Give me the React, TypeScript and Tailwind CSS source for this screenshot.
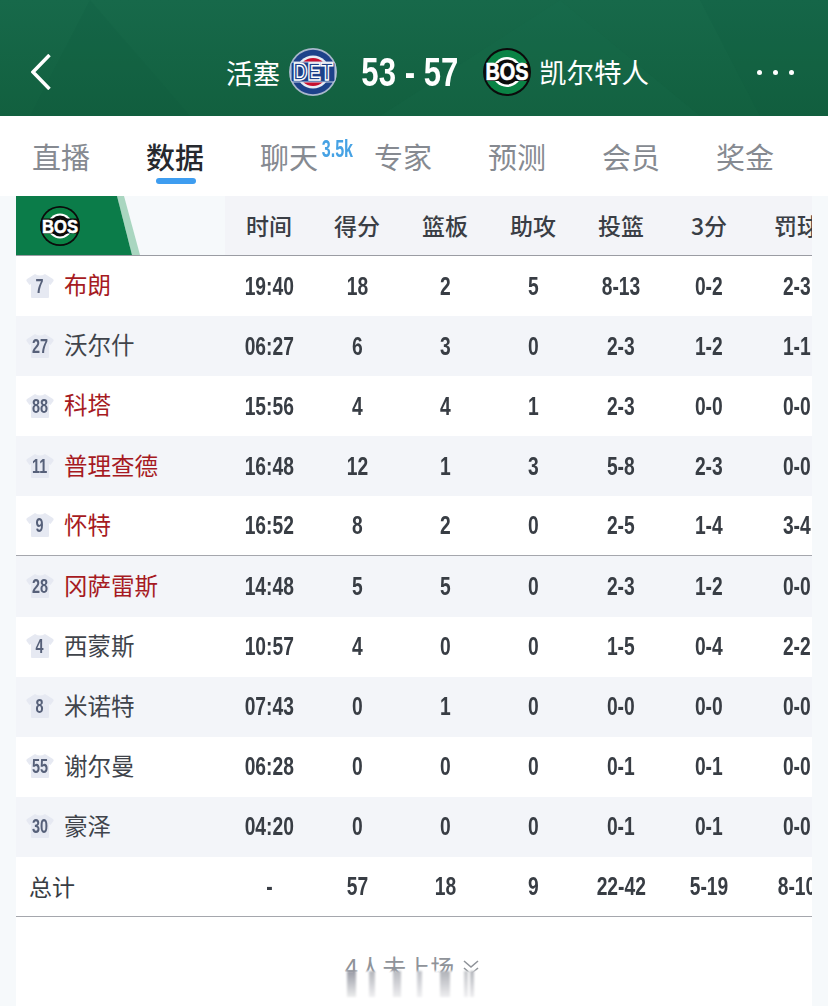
import React from 'react';

const cjk = { fontFamily: '"Noto Sans CJK SC", "Noto Sans", sans-serif' };

type Player = {
  no: string;
  name: string;
  starter?: boolean;
  stats: string[];
};

const players: Player[] = [
  { no: '7', name: '布朗', starter: true, stats: ['19:40', '18', '2', '5', '8-13', '0-2', '2-3'] },
  { no: '27', name: '沃尔什', stats: ['06:27', '6', '3', '0', '2-3', '1-2', '1-1'] },
  { no: '88', name: '科塔', starter: true, stats: ['15:56', '4', '4', '1', '2-3', '0-0', '0-0'] },
  { no: '11', name: '普理查德', starter: true, stats: ['16:48', '12', '1', '3', '5-8', '2-3', '0-0'] },
  { no: '9', name: '怀特', starter: true, stats: ['16:52', '8', '2', '0', '2-5', '1-4', '3-4'] },
  { no: '28', name: '冈萨雷斯', starter: true, stats: ['14:48', '5', '5', '0', '2-3', '1-2', '0-0'] },
  { no: '4', name: '西蒙斯', stats: ['10:57', '4', '0', '0', '1-5', '0-4', '2-2'] },
  { no: '8', name: '米诺特', stats: ['07:43', '0', '1', '0', '0-0', '0-0', '0-0'] },
  { no: '55', name: '谢尔曼', stats: ['06:28', '0', '0', '0', '0-1', '0-1', '0-0'] },
  { no: '30', name: '豪泽', stats: ['04:20', '0', '0', '0', '0-1', '0-1', '0-0'] },
];

const columns = ['时间', '得分', '篮板', '助攻', '投篮', '3分', '罚球'];
const totals = ['-', '57', '18', '9', '22-42', '5-19', '8-10'];
const tabs = ['直播', '数据', '聊天', '专家', '预测', '会员', '奖金'];

const Num = ({ children, className = 'scale-x-[0.74]' }: { children: React.ReactNode; className?: string }) => (
  <span
    className={`inline-block whitespace-nowrap font-bold ${className}`}
    style={{ fontFamily: '"Liberation Sans", Arial, sans-serif' }}
  >
    {children}
  </span>
);

const DetLogo = () => (
  <svg viewBox="0 0 48 48" className="h-12 w-12 shrink-0 overflow-visible">
    <circle cx="24" cy="24" r="24" fill="#a9b8cc" />
    <circle cx="24" cy="24" r="22.3" fill="#1d428a" />
    <circle cx="24" cy="24" r="16.5" fill="#e8edf5" />
    <circle cx="24" cy="24" r="14" fill="#c8102e" />
    <rect x="2" y="14" width="44" height="20" rx="2" fill="#1d428a" stroke="#c9d4e6" strokeWidth="1" />
    <text
      x="24"
      y="32"
      textAnchor="middle"
      fontFamily="Liberation Sans"
      fontWeight="700"
      fontSize="23"
      textLength="40"
      lengthAdjust="spacingAndGlyphs"
      fill="#1d428a"
      stroke="#ffffff"
      strokeWidth="1.4"
    >
      DET
    </text>
  </svg>
);

const BosLogo = ({ size = 'h-12 w-12' }: { size?: string }) => (
  <svg viewBox="0 0 48 48" className={`${size} shrink-0 overflow-visible`}>
    <circle cx="24" cy="24" r="24" fill="#0b0b0b" />
    <circle cx="24" cy="24" r="22" fill="#0a8345" />
    <circle cx="24" cy="24" r="15" fill="#ffffff" />
    <circle cx="24" cy="24" r="12.5" fill="#0b0b0b" />
    <rect x="1" y="15" width="46" height="18" rx="4" fill="#0b0b0b" />
    <text
      x="24"
      y="32"
      textAnchor="middle"
      fontFamily="Liberation Sans"
      fontWeight="700"
      fontSize="23"
      textLength="43"
      lengthAdjust="spacingAndGlyphs"
      fill="#ffffff"
      stroke="#ffffff"
      strokeWidth="0.7"
    >
      BOS
    </text>
  </svg>
);

const Jersey = ({ no }: { no: string }) => (
  <div className="relative h-[24px] w-[28px] shrink-0">
    <svg viewBox="0 0 28 24" className="h-full w-full">
      <path
        d="M9 0 Q14 3 19 0 L27 5 Q28 6 27.5 7 L24.5 11 L23 10 L23 23 Q23 24 22 24 L6 24 Q5 24 5 23 L5 10 L3.5 11 L0.5 7 Q0 6 1 5 Z"
        fill="#e6e9f2"
      />
    </svg>
    <div className="absolute inset-0 flex items-center justify-center text-[20px] leading-none text-[#566079]">
      <Num className="scale-x-[0.72]">{no}</Num>
    </div>
  </div>
);

const StatCell = ({ value }: { value: string }) => (
  <div className="flex w-[88px] shrink-0 justify-center text-[26px] leading-none text-[#383d44]">
    <Num>{value}</Num>
  </div>
);

const App: React.FC = () => {
  return (
    <div className="relative h-[1006px] w-[828px] overflow-hidden bg-[#f6f9fb]" style={cjk}>
      {/* Match header */}
      <header className="relative flex h-[116px] items-center overflow-hidden bg-gradient-to-b from-[#17694a] to-[#12603f] pt-[28px] text-white">
        <svg viewBox="0 0 828 116" className="absolute inset-0 h-full w-full">
          <polygon points="90,0 190,116 30,116" fill="#0f5a3a" opacity="0.15" />
          <polygon points="380,116 560,0 700,116" fill="#1d7350" opacity="0.15" />
          <polygon points="700,0 828,0 828,116 760,116" fill="#0f5a3a" opacity="0.15" />
        </svg>
        <svg viewBox="0 0 20 36" className="relative ml-[31px] mr-[175px] h-[36px] w-[20px] shrink-0" fill="none" stroke="#ffffff" strokeWidth="3.5">
          <path d="M18.5 1 L2 18 L18.5 35" />
        </svg>
        <div className="relative flex items-center">
          <span className="w-[54px] whitespace-nowrap text-[27px] leading-none">活塞</span>
          <div className="ml-[9px]">
            <DetLogo />
          </div>
          <div className="flex w-[146px] justify-center text-[41px] leading-none">
            <Num className="scale-x-[0.76]">53 - 57</Num>
          </div>
          <BosLogo />
          <span className="ml-[8px] whitespace-nowrap text-[27.5px] leading-none">凯尔特人</span>
        </div>
        <div className="relative ml-auto mr-[34px] flex gap-[11px]">
          <span className="h-[5px] w-[5px] rounded-full bg-white" />
          <span className="h-[5px] w-[5px] rounded-full bg-white" />
          <span className="h-[5px] w-[5px] rounded-full bg-white" />
        </div>
      </header>

      {/* Tabs */}
      <nav className="flex h-[80px] items-center bg-white pl-[4px]">
        {tabs.map((tab, i) => (
          <div key={tab} className="relative flex h-full w-[114px] items-center justify-center">
            <span className={`text-[29px] leading-none ${i === 1 ? 'font-medium text-[#26292e]' : 'text-[#868a91]'}`}>{tab}</span>
            {i === 1 && <span className="absolute bottom-[12px] left-[38px] h-[6px] w-[40px] rounded-full bg-[#3e9df0]" />}
            {i === 2 && (
              <span className="absolute left-[83px] top-[20px] text-[23px] leading-none text-[#46a2e4]">
                <Num className="scale-x-[0.7]">3.5k</Num>
              </span>
            )}
          </div>
        ))}
      </nav>

      {/* Box score */}
      <section className="mx-[16px] w-[796px] overflow-hidden bg-white">
        <div className="flex h-[60px] border-b border-[#9a9ca3] bg-[#f3f4f8]">
          <div className="h-full w-[209px] shrink-0 bg-[#f6f9fb]">
            <div className="relative h-full w-[124px]">
              <svg viewBox="0 0 124 59" preserveAspectRatio="none" className="absolute inset-0 h-full w-full">
                <polygon points="101,0 108,0 124,59 116,59" fill="#a9d6c0" />
                <polygon points="0,0 101,0 116,59 0,59" fill="#0b7c49" />
              </svg>
              <div className="absolute left-[24px] top-[10px]">
                <BosLogo size="h-[40px] w-[40px]" />
              </div>
            </div>
          </div>
          {columns.map((col) => (
            <div key={col} className="flex w-[88px] shrink-0 items-center justify-center whitespace-nowrap text-[23px] font-medium leading-none text-[#3a3e45]">
              {col}
            </div>
          ))}
        </div>

        {players.map((p, i) => (
          <div
            key={p.no}
            className={`flex h-[60.1px] items-center pb-px ${i % 2 === 1 ? 'bg-[#f3f5f9]' : 'bg-white'} ${i === 4 ? 'border-b border-[#a5a7ad]' : ''}`}
          >
            <div className="flex w-[209px] shrink-0 items-center pl-[10px]">
              <Jersey no={p.no} />
              <span className={`ml-[10px] whitespace-nowrap pb-[1px] text-[23.5px] leading-none ${p.starter ? 'text-[#a61a22]' : 'text-[#40444b]'}`}>{p.name}</span>
            </div>
            {p.stats.map((s, j) => (
              <StatCell key={j} value={s} />
            ))}
          </div>
        ))}

        <div className="flex h-[60px] items-center border-b border-[#a5a7ad] bg-white">
          <div className="w-[209px] shrink-0 pl-[13px] text-[23px] leading-none text-[#383d44]">总计</div>
          {totals.map((s, j) => (
            <StatCell key={j} value={s} />
          ))}
        </div>

        <div className="flex h-[90px] justify-center bg-white pt-[38px]">
          <div className="ml-[-3px] flex items-center gap-[8px] self-start text-[24px] leading-none text-[#8f9399]">
            <span>4人未上场</span>
            <svg viewBox="0 0 18 18" className="h-[18px] w-[18px]" fill="none" stroke="#8f9399" strokeWidth="1.6">
              <path d="M2 3 L9 9 L16 3 M2 10 L9 16 L16 10" />
            </svg>
          </div>
        </div>
      </section>

      {/* Smeared strip over the footer text */}
      <div className="absolute left-[322px] top-[971px] flex h-[26px] w-[186px] items-stretch bg-white blur-[1px]">
        <div className="ml-[25px] w-[9px] bg-gradient-to-b from-[#9a9ca6] to-[#eceded]" />
        <div className="ml-[13px] w-[6px] bg-gradient-to-b from-[#b4b6bc] to-[#f0f0f2]" />
        <div className="ml-[18px] w-[8px] bg-gradient-to-b from-[#b8bac0] to-[#eeeef0]" />
        <div className="ml-[16px] w-[5px] bg-gradient-to-b from-[#c0c2c8] to-[#f0f0f2]" />
        <div className="ml-[18px] w-[10px] bg-gradient-to-b from-[#b0b2b8] to-[#eeeef0]" />
        <div className="ml-[14px] w-[4px] bg-gradient-to-b from-[#c4c6ca] to-[#f0f0f2]" />
        <div className="ml-[2px] w-[4px] bg-gradient-to-b from-[#b4b6bc] to-[#eeeef0]" />
      </div>
    </div>
  );
};

export default App;
